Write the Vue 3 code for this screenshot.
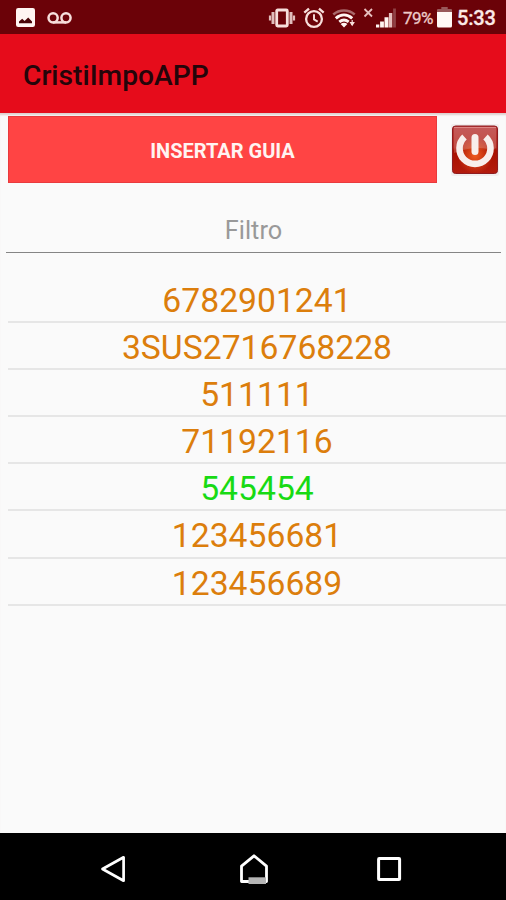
<script setup>
const guides = [
  { code: '6782901241', done: false },
  { code: '3SUS2716768228', done: false },
  { code: '511111', done: false },
  { code: '71192116', done: false },
  { code: '545454', done: true },
  { code: '123456681', done: false },
  { code: '123456689', done: false },
]
</script>

<template>
  <div class="screen">
    <header class="status">
      <svg class="i-image" width="19" height="19" viewBox="0 0 19 19">
        <rect width="19" height="19" rx="2.2" fill="#fff5f2" />
        <path d="M3 15.2V13.500L6.200 10.800 8.600 13 12.200 9.600 16 13.500V15.200Z" fill="#4a0508" />
      </svg>
      <svg class="i-voice" width="26" height="14" viewBox="0 0 26 14" fill="none" stroke="#f7dedb" stroke-width="2.5">
        <circle cx="6.1" cy="6.8" r="4.6" />
        <circle cx="19" cy="6.8" r="4.6" />
        <path d="M6.1 11.4H19" />
      </svg>
      <span class="spacer"></span>
      <svg class="i-vibrate" width="28" height="22" viewBox="0 0 28 22" fill="none" stroke="#f7dedb">
        <rect x="8.700" y="3" width="10.600" height="16" rx="1" stroke-width="2.800" />
        <path d="M5 5v12M23 5v12" stroke-width="3" opacity=".85" />
        <path d="M2 8.500v5M26 8.500v5" stroke-width="2.200" opacity=".85" />
      </svg>
      <svg class="i-alarm" width="22" height="22" viewBox="0 0 22 22" fill="none" stroke="#f7dedb">
        <circle cx="11" cy="12" r="7.900" stroke-width="2.300" />
        <path d="M11 7.200V12.400L14.700 14.600" stroke-width="1.900" />
        <path d="M1.300 5.600 6 1.700M20.700 5.600 16 1.700" stroke-width="2.400" />
      </svg>
      <svg class="i-wifi" width="24" height="19" viewBox="0 0 24 19" fill="none">
        <path d="M1.300 5.600C7.500.2 16.500.2 22.700 5.600" stroke="#a9686a" stroke-width="2.600" />
        <path d="M3.800 9.300C8.800 5 15.200 5 20.200 9.300" stroke="#fff5f2" stroke-width="3" />
        <path d="M7.300 12.900C10.200 10.500 13.800 10.500 16.700 12.900" stroke="#fff5f2" stroke-width="2.800" />
        <path d="M8.600 15Q12 12.700 15.400 15L12 18.400Z" fill="#fff5f2" />
        <path d="M20.200 11V14M18.600 13.700h3.200L20.200 16.200Z" stroke="#f7dedb" stroke-width="1.200" fill="#f7dedb" />
      </svg>
      <svg class="i-signal" width="35" height="21" viewBox="0 0 35 21">
        <path d="M2.500 2 10 9.500M10 2 2.500 9.500" stroke="#e7bfbe" stroke-width="1.800" fill="none" />
        <path d="M14 17.500h3.300V20.500h-3.300ZM18.100 14.500h3.800v6h-3.800ZM22.500 10.200h4v10.300h-4Z" fill="#fff5f2" />
        <path d="M26.900 6h3.400v14.500h-3.400Z" fill="#e5bfbc" />
        <path d="M31.100 1.500h2.800v19h-2.800Z" fill="#8f4145" />
      </svg>
      <span class="percent">79%</span>
      <svg class="i-battery" width="15" height="21" viewBox="0 0 15 21">
        <path d="M4.300 0h6.400v2H14q1 0 1 1v3H0V3q0-1 1-1h3.300Z" fill="#98585a" />
        <path d="M0 5h15v14q0 1.500-1.500 1.500h-12Q0 20.500 0 19Z" fill="#fff8f6" />
      </svg>
      <span class="clock">5:33</span>
    </header>

    <div class="appbar"><h1>CristiImpoAPP</h1></div>

    <main>
      <div class="actions">
        <button class="insert">INSERTAR GUIA</button>
        <button class="power" aria-label="Salir">
          <svg width="50" height="55" viewBox="0 0 50 55">
            <defs>
              <linearGradient id="face" x1="0" y1="0" x2="0" y2="1">
                <stop offset="0" stop-color="#b93a3a" />
                <stop offset=".45" stop-color="#b52a20" />
                <stop offset=".52" stop-color="#a81000" />
                <stop offset="1" stop-color="#b31b0d" />
              </linearGradient>
              <radialGradient id="glow" cx=".5" cy=".62" r=".4">
                <stop offset="0" stop-color="#ee5b20" />
                <stop offset="1" stop-color="#ee5b20" stop-opacity="0" />
              </radialGradient>
            </defs>
            <rect x="1" y="2" width="48" height="52" rx="2" fill="#f1eeee" />
            <rect x="2.500" y="4" width="45" height="47.500" rx="3" fill="url(#face)" stroke="#8e1c20" />
            <rect x="3" y="5" width="44" height="46" rx="3" fill="url(#glow)" />
            <path d="M4 6h42v20Q42 30 38 27Q22 24 4 31Z" fill="#fff" opacity=".17" />
            <path d="M4 5.500h42" stroke="#dd8584" stroke-width="1.200" />
            <path d="M14.500 15A15.500 15.500 0 1 0 35.500 15" fill="none" stroke="#f8eeec" stroke-width="6.600" />
            <path d="M25 15.500V29.500" stroke="#f8eeec" stroke-width="7" stroke-linecap="round" />
          </svg>
        </button>
      </div>
      <input class="filter" type="text" placeholder="Filtro" />
      <ul class="guides">
        <li v-for="g in guides" :key="g.code" :class="{ done: g.done }">{{ g.code }}</li>
      </ul>
    </main>

    <nav>
      <svg width="26" height="30" viewBox="0 0 26 30" fill="none" stroke="#fff" stroke-width="2.700">
        <path d="M2.500 15 23.600 3.300V26.700Z" stroke-linejoin="round" />
      </svg>
      <svg class="home" width="30" height="32" viewBox="0 0 30 32" fill="none">
        <path d="M2.500 28.500V13.200L15 2.800 27.500 13.200V28.500Z" stroke="#fff" stroke-width="2.800" stroke-linejoin="round" />
        <path d="M9.500 24.300h17.500v6.700H9.500Z" fill="#b5b5b5" />
      </svg>
      <svg width="26" height="26" viewBox="0 0 26 26" fill="none">
        <rect x="2.600" y="2.600" width="21" height="21" rx=".6" stroke="#fff" stroke-width="3" />
      </svg>
    </nav>
  </div>
</template>

<style>
body {
  margin: 0;
}
</style>

<style scoped>
.screen {
  display: flex;
  flex-direction: column;
  width: 506px;
  height: 900px;
  overflow: hidden;
  background: #fafafa;
  font-family: Roboto, "Liberation Sans", sans-serif;
}
.screen svg {
  display: block;
  flex: none;
}
.status {
  display: flex;
  align-items: center;
  box-sizing: border-box;
  height: 34px;
  padding: 1px 10px 0 16px;
  background: #6b0208;
  color: #fbe9e6;
}
.i-voice {
  margin-left: 12px;
}
.spacer {
  flex: 1;
}
.i-vibrate {
  margin-right: 1px;
}
.i-alarm {
  margin-left: 6px;
}
.i-wifi {
  margin: 2px 0 0 7px;
}
.i-signal {
  margin-left: 6px;
}
.percent {
  width: 31px;
  margin-left: 6px;
  font-size: 17px;
  line-height: 34px;
  letter-spacing: -0.5px;
  color: #edcac8;
  -webkit-text-stroke: 0.3px #edcac8;
}
.i-battery {
  margin-left: 3px;
}
.clock {
  width: 39px;
  margin-left: 5px;
  font-size: 20px;
  font-weight: 500;
  line-height: 34px;
  letter-spacing: -0.2px;
  -webkit-text-stroke: 0.3px #fbe9e6;
}
.appbar {
  display: flex;
  align-items: center;
  box-sizing: border-box;
  height: 79px;
  padding: 5px 23px 0;
  background: #e60c1b;
}
h1 {
  margin: 0;
  font-size: 28.2px;
  font-weight: 500;
  line-height: 32px;
  color: #24050a;
}
main {
  flex: 1;
  box-shadow: inset 0 3px 2px -1px #ddd0ce;
}
.actions {
  display: flex;
  padding: 3px 6px 0 8px;
}
button {
  padding: 0;
  border: 0;
  background: none;
  font-family: inherit;
}
.insert {
  box-sizing: border-box;
  width: 429px;
  height: 67px;
  padding-top: 2px;
  border: 1px solid #e93a3d;
  background: #ff4444;
  color: #fff4f2;
  font-size: 20px;
  font-weight: 700;
}
.power {
  height: 55px;
  margin: 6px 0 0 13px;
}
.filter {
  display: block;
  box-sizing: border-box;
  width: 495px;
  height: 53px;
  margin: 17px 0 0 6px;
  padding: 8px 0 0;
  border: 0;
  border-bottom: 1.5px solid #858585;
  background: none;
  font-family: inherit;
  font-size: 25.3px;
  text-align: center;
  outline: 0;
}
.filter::placeholder {
  color: #999;
  opacity: 1;
}
.guides {
  margin: 23px 0 0 8px;
  padding: 0;
  list-style: none;
}
li {
  box-sizing: border-box;
  height: 47.1px;
  border-bottom: 2px solid #e6e6e6;
  color: #dc7e0c;
  font-size: 33.7px;
  line-height: 49.6px;
  text-align: center;
}
li.done {
  color: #18da14;
}
nav {
  display: flex;
  justify-content: space-between;
  align-items: center;
  box-sizing: border-box;
  height: 67px;
  padding: 4px 104px 0 100px;
  background: #000;
}
.home {
  margin-left: 6px;
}
</style>
